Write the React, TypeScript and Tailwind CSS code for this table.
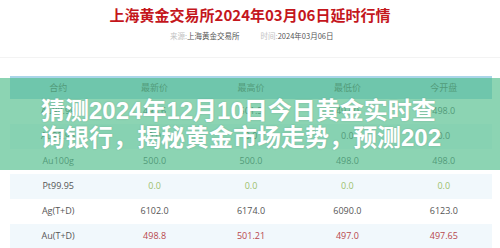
import React from 'react';

type Row = { name: string; vals: string[]; tone: string; bg: string };

const rows: Row[] = [
  { name: 'Au99.99', vals: ['498.6', '501.5', '497.0', '498.0'], tone: 'text-[#555555]', bg: 'bg-white' },
  { name: 'Au99.95', vals: ['0.0', '0.0', '0.0', '0.0'], tone: 'text-[#555555]', bg: 'bg-[#f1f8fc]' },
  { name: 'Au100g', vals: ['500.0', '500.0', '498.0', '498.0'], tone: 'text-[#555555]', bg: 'bg-white' },
  { name: 'Pt99.95', vals: ['0.0', '0.0', '0.0', '0.0'], tone: 'text-[#9cc06c]', bg: 'bg-[#f1f8fc]' },
  { name: 'Ag(T+D)', vals: ['6102.0', '6174.0', '6090.0', '6123.0'], tone: 'text-[#555555]', bg: 'bg-white' },
  { name: 'Au(T+D)', vals: ['498.8', '501.21', '497.0', '497.65'], tone: 'text-[#b8474c]', bg: 'bg-[#f1f8fc]' },
];

const heads = ['合约', '最新价', '最高价', '最低价', '今开盘'];

function App() {
  return (
    <div
      className="relative w-[500px] h-[248px] overflow-hidden bg-white"
      style={{ fontFamily: '"Open Sans", "Noto Sans CJK SC", sans-serif' }}
    >
      {/* Page title */}
      <h1
        className="pt-[6px] text-center text-[15px] leading-[18px] font-bold text-[#c4161c]"
        style={{ fontFamily: '"Noto Sans CJK SC", sans-serif' }}
      >
        上海黄金交易所2024年03月06日延时行情
      </h1>

      {/* Source / time */}
      <div
        className="mt-[6px] flex pl-[170px] gap-[21px] text-[7.5px] leading-[12px] text-[#555555]"
        style={{ fontFamily: '"Noto Sans CJK SC", sans-serif' }}
      >
        <span>
          <span className="text-[#c2c2c2]">来源:</span>上海黄金交易所
        </span>
        <span>
          <span className="text-[#c2c2c2]">时间:</span>2024年03月06日
        </span>
      </div>

      <div className="mt-[15px] border-t border-[#f3f3f3]" />

      {/* Quote table */}
      <div className="mx-[10px] mt-[18px] w-[482px] text-[9px]">
        <div
          className="grid grid-cols-5 h-[22.5px] items-center bg-[#aad5e9] text-[#555555] text-center"
          style={{ fontFamily: '"Noto Sans CJK SC", sans-serif' }}
        >
          {heads.map((h) => (
            <div key={h}>{h}</div>
          ))}
        </div>
        {rows.map((r) => (
          <div key={r.name} className={`grid grid-cols-5 h-[25px] items-center text-center ${r.bg}`}>
            <div className="text-[#555555]">{r.name}</div>
            {r.vals.map((v, i) => (
              <div key={i} className={r.tone}>
                {v}
              </div>
            ))}
          </div>
        ))}
      </div>

      {/* Article title overlay */}
      <div className="absolute left-0 right-0 top-[78px] h-[92px] bg-[rgba(80,190,140,0.66)]">
        <div
          className="ml-[41px] mt-[19px] w-[420px] overflow-hidden text-[24px] leading-[27px] font-bold text-white whitespace-nowrap"
          style={{ fontFamily: '"Liberation Sans", "Noto Sans CJK SC", sans-serif', textShadow: '0 0 2px rgba(0,0,0,0.15)' }}
        >
          <div>猜测2024年12月10日今日黄金实时查</div>
          <div>询银行，揭秘黄金市场走势，预测202</div>
        </div>
      </div>
    </div>
  );
}

export default App;
